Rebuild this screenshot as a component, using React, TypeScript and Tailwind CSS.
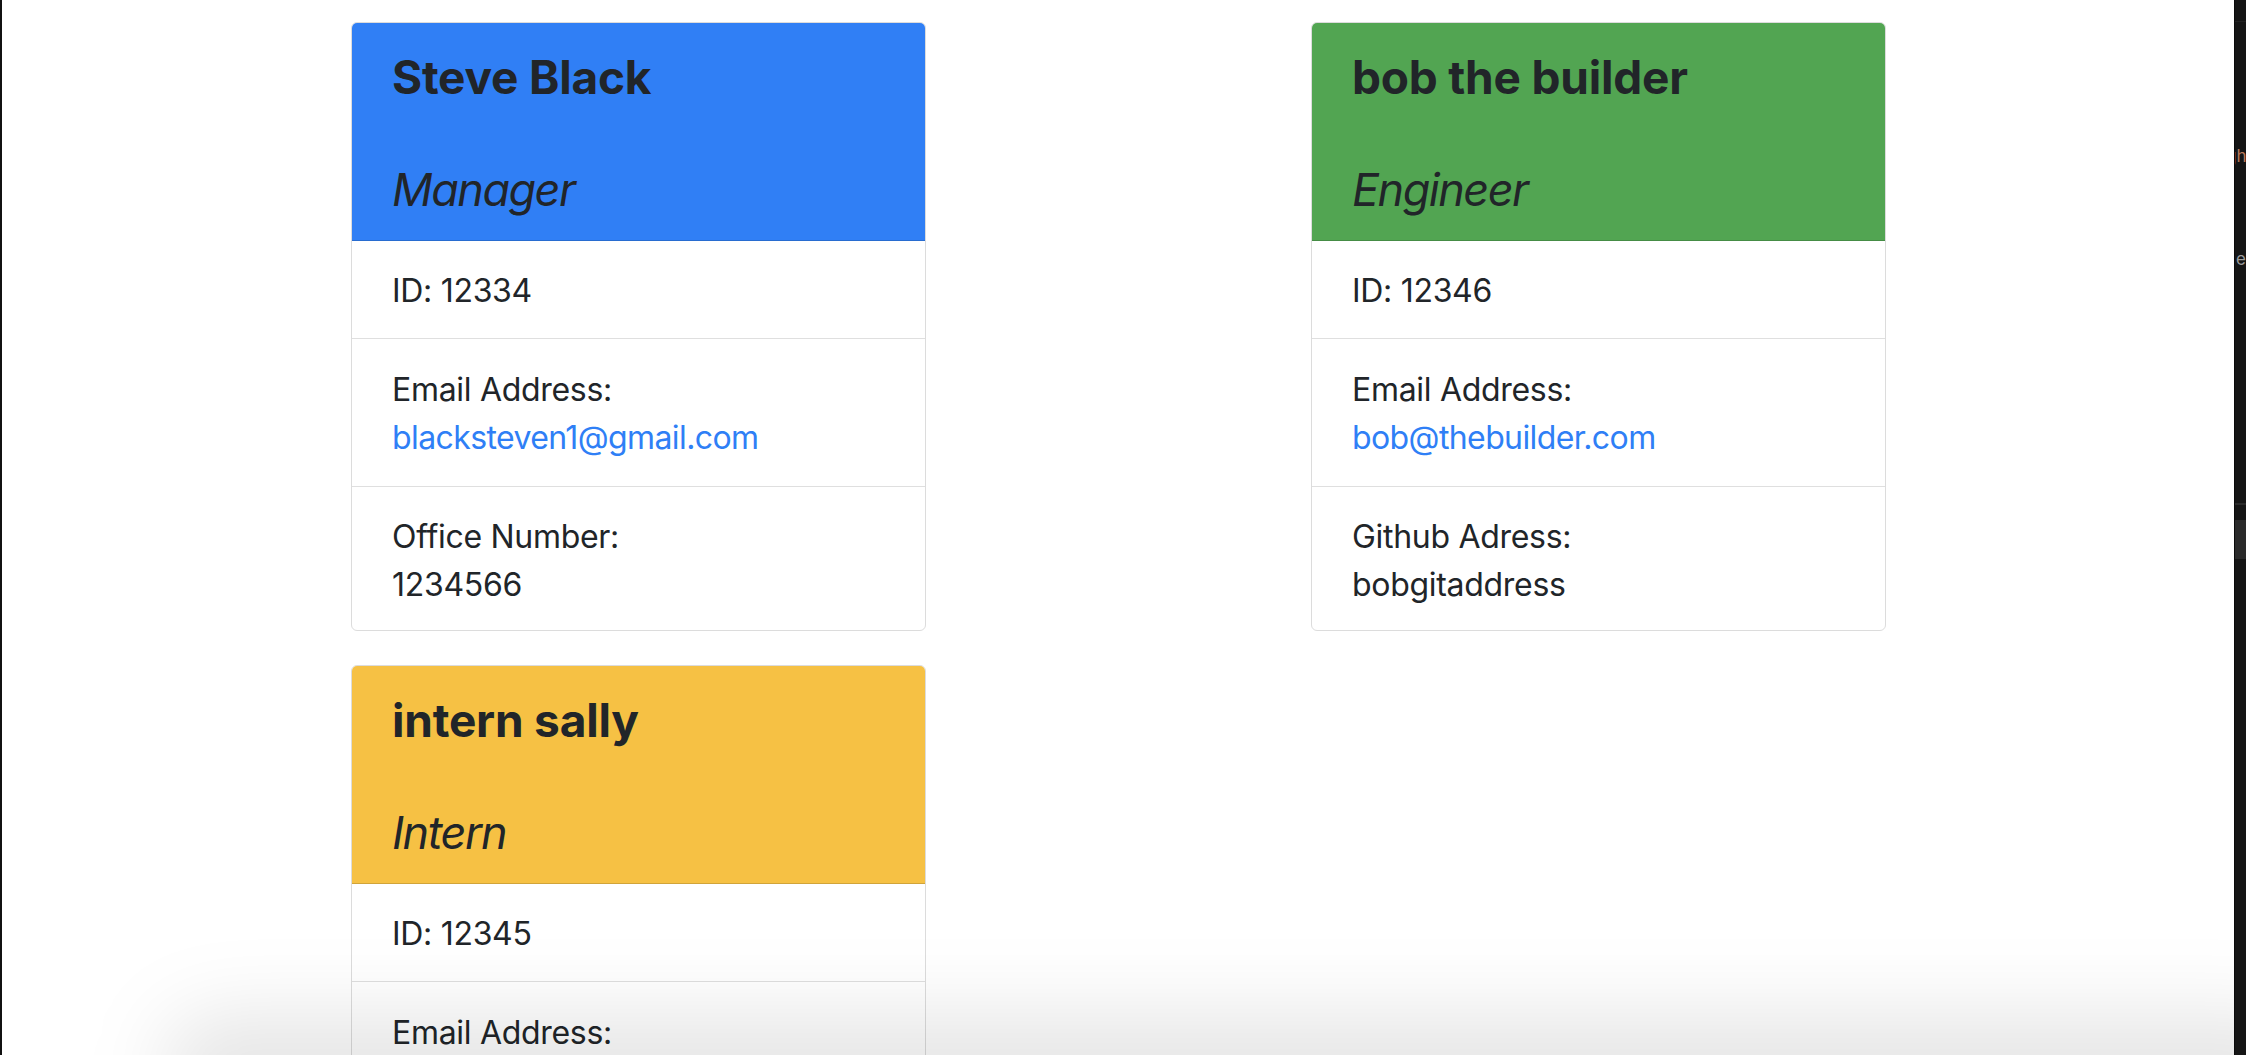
import React from "react";

type Employee = {
  name: string;
  role: string;
  id: string;
  email: string;
  extraLabel: string;
  extraValue: string;
  header: string;
};

const team: Employee[] = [
  {
    name: "Steve Black",
    role: "Manager",
    id: "12334",
    email: "blacksteven1@gmail.com",
    extraLabel: "Office Number:",
    extraValue: "1234566",
    header: "bg-[#307ff5]",
  },
  {
    name: "bob the builder",
    role: "Engineer",
    id: "12346",
    email: "bob@thebuilder.com",
    extraLabel: "Github Adress:",
    extraValue: "bobgitaddress",
    header: "bg-[#52a552]",
  },
  {
    name: "intern sally",
    role: "Intern",
    id: "12345",
    email: "sally@intern.com",
    extraLabel: "School:",
    extraValue: "State University",
    header: "bg-[#f6c144]",
  },
];

const row = "px-[40px] border-t border-[#dfdfdf] first:border-t-0";

const EmployeeCard: React.FC<{ emp: Employee }> = ({ emp }) => (
  <div className="w-[575px] bg-white border border-[#dcdcdc] rounded-[6px] overflow-hidden self-start">
    {/* Header */}
    <div className={`${emp.header} border-b border-black/15 pt-[25px] pb-[21px] px-[40px]`}>
      <h2 className="text-[46px] leading-[58px] font-bold tracking-[-0.2px]">{emp.name}</h2>
      <h3 className="mt-[55px] text-[45px] leading-[58px] italic font-normal tracking-[-1.5px]">{emp.role}</h3>
    </div>

    <ul className="text-[32px] leading-[48px] tracking-[-0.3px]">
      <li className={`${row} pt-[26px] pb-[23px]`}>ID: {emp.id}</li>
      <li className={`${row} pt-[27px] pb-[24px]`}>
        <div>Email Address:</div>
        <a href={`mailto:${emp.email}`} className="text-[#2f7ff6] tracking-[-0.6px]">
          {emp.email}
        </a>
      </li>
      <li className={`${row} pt-[26px] pb-[21px]`}>
        <div>{emp.extraLabel}</div>
        <div>{emp.extraValue}</div>
      </li>
    </ul>
  </div>
);

export default function App() {
  return (
    <div
      className="h-[1055px] w-full flex bg-white text-[#212529] overflow-hidden"
      style={{ fontFamily: "Inter, 'Noto Sans', sans-serif" }}
    >
      {/* left window edge */}
      <div className="w-[2px] bg-[#111]" />

      <main className="relative flex-1 overflow-hidden">
        <div className="grid grid-cols-[575px_575px] gap-x-[385px] gap-y-[34px] pl-[349px] pt-[22px]">
          {team.map((emp) => (
            <EmployeeCard key={emp.id} emp={emp} />
          ))}
        </div>

        {/* soft dock shadow at the bottom */}
        <div className="absolute left-[160px] -right-[80px] -bottom-[70px] h-[110px] rounded-full bg-black/10 blur-[40px] pointer-events-none" />
      </main>

      {/* editor strip on the right */}
      <div className="w-[12px] bg-[#151515] border-l border-[#0a0a0a] flex flex-col overflow-hidden text-[17px] leading-none">
        <div className="h-[22px] border-b border-[#222]" />
        <div className="mt-[126px] -ml-[9px] text-[#b8785a] whitespace-nowrap">gh</div>
        <div className="mt-[86px] -ml-[4px] text-[#9a9a9a] whitespace-nowrap">:e</div>
        <div className="mt-[235px] h-[2px] bg-[#2a2a2a]" />
        <div className="mt-[15px] h-[39px] bg-[#2a2a2a]" />
      </div>
    </div>
  );
}
